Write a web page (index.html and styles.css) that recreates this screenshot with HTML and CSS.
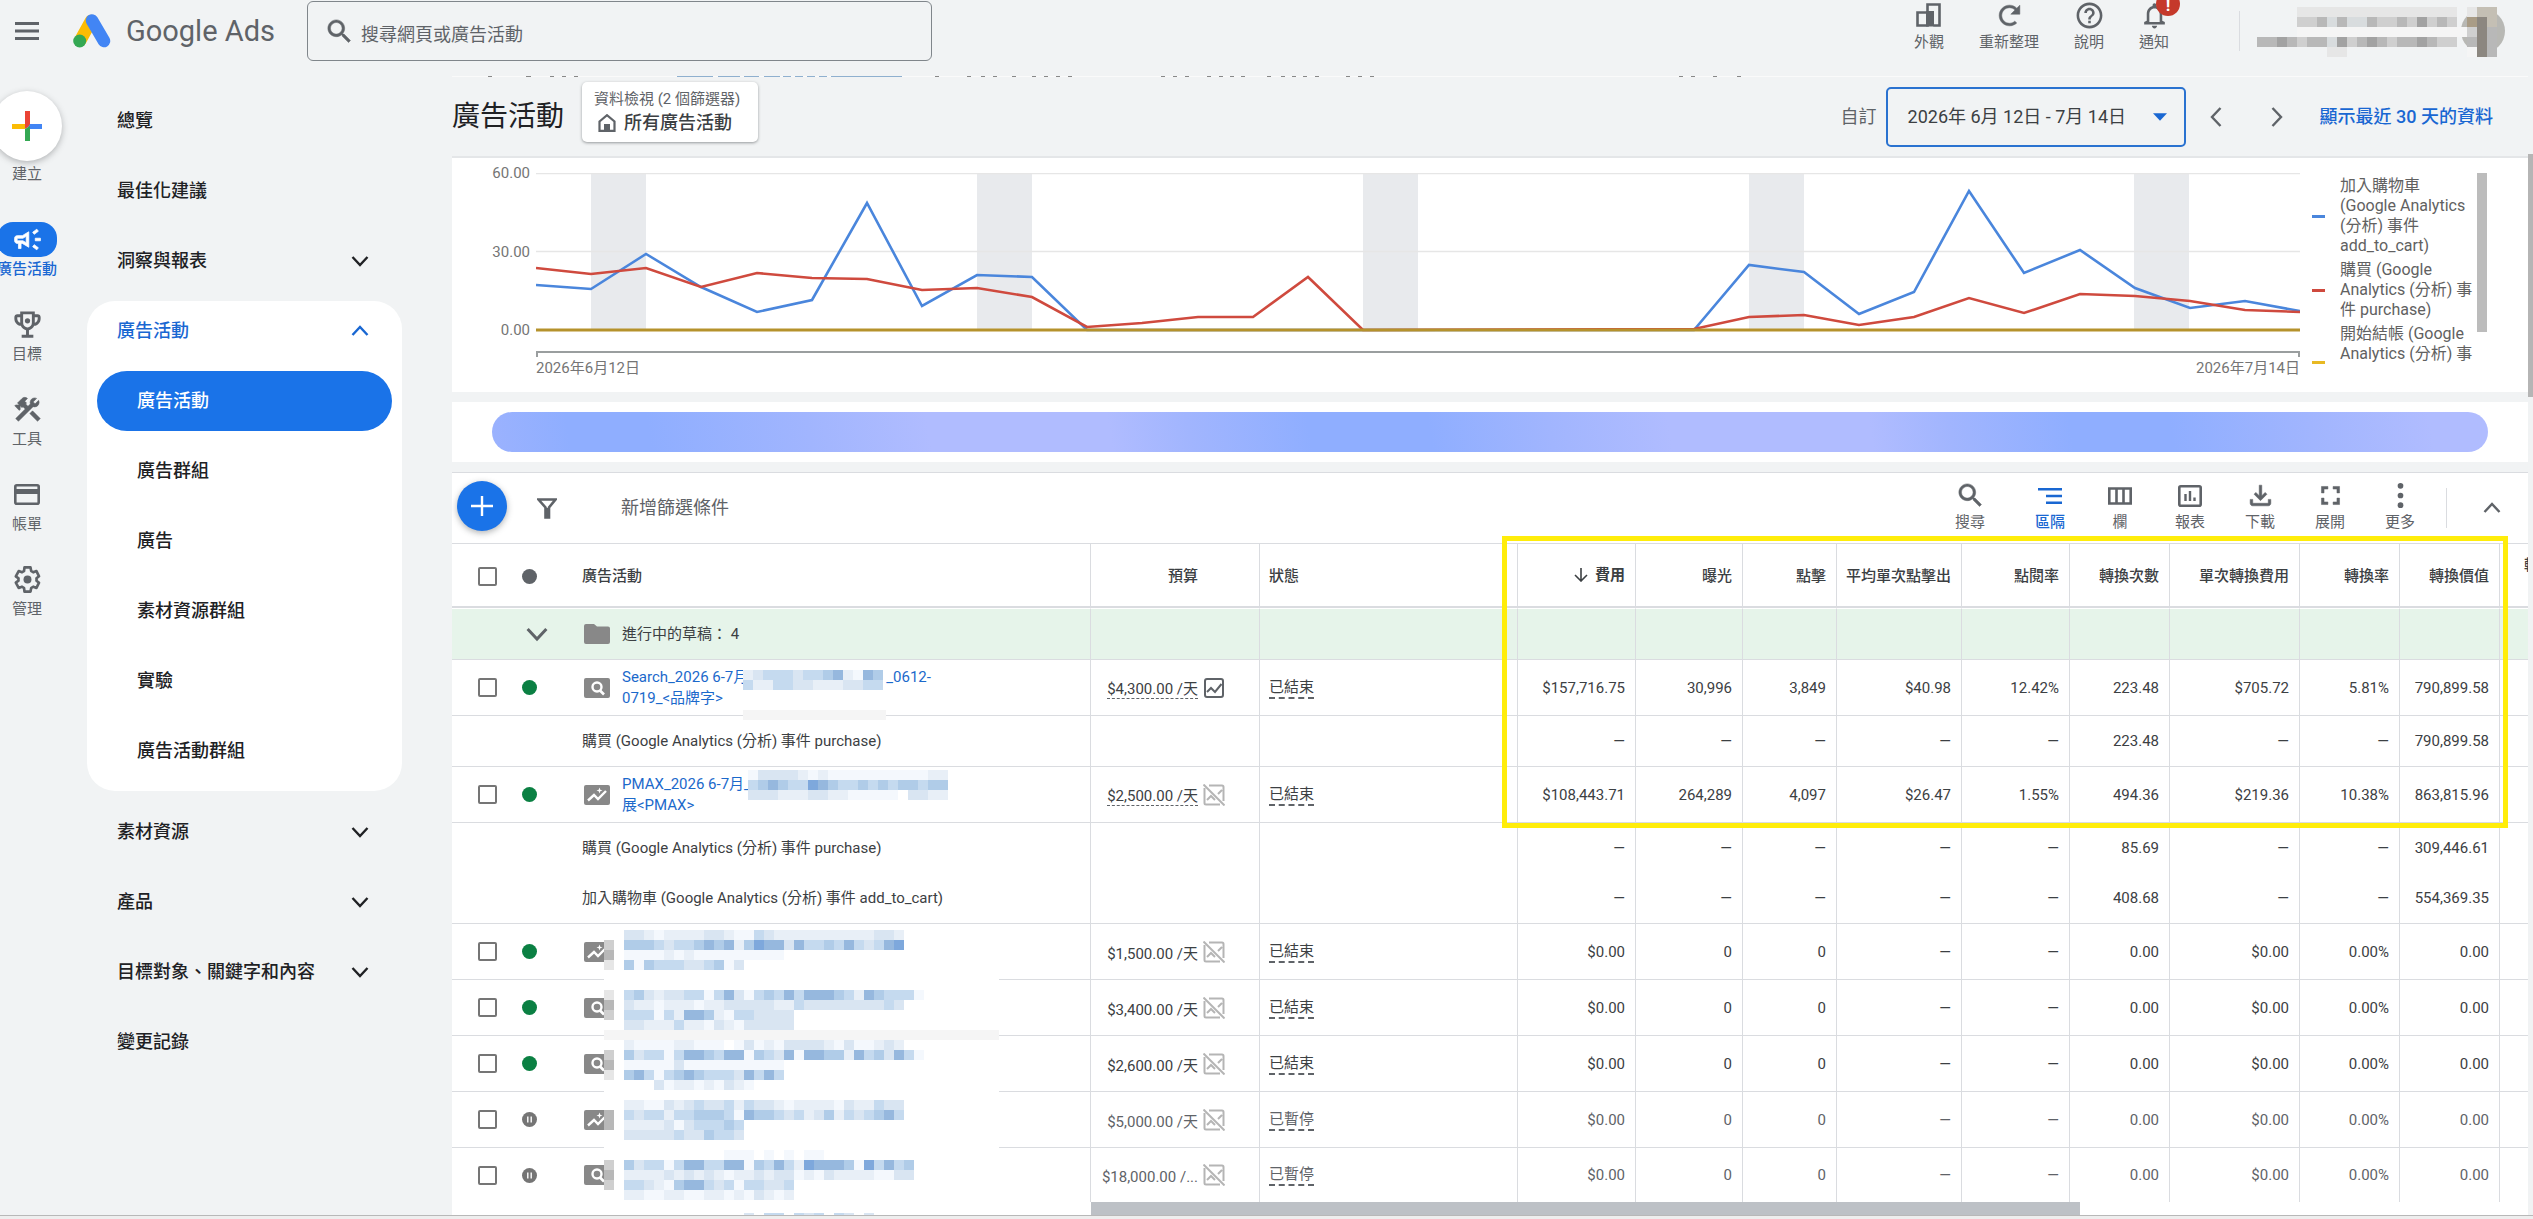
FILE: index.html
```html
<!DOCTYPE html>
<html lang="zh-Hant">
<head>
<meta charset="utf-8">
<meta name="viewport" content="width=device-width, initial-scale=1">
<title>廣告活動 - Google Ads</title>
<link rel="stylesheet" href="styles.css">
</head>
<body>
<svg class="sprite" aria-hidden="true">
  <symbol id="i-search" viewBox="0 0 24 24"><path d="M15.5 14h-.79l-.28-.27C15.41 12.59 16 11.11 16 9.5 16 5.91 13.09 3 9.5 3S3 5.91 3 9.5 5.91 16 9.5 16c1.61 0 3.09-.59 4.23-1.57l.27.28v.79l5 4.99L20.49 19l-4.99-5zm-6 0C7.01 14 5 11.99 5 9.5S7.01 5 9.5 5 14 7.01 14 9.5 11.99 14 9.5 14z" stroke="currentColor" stroke-width=".4"/></symbol>
  <symbol id="i-down" viewBox="0 0 24 24"><path d="M4.5 8l7.5 8 7.500-8" fill="none" stroke="currentColor" stroke-width="2.400"/></symbol>
  <symbol id="i-up" viewBox="0 0 24 24"><path d="M4.500 16L12 8l7.500 8" fill="none" stroke="currentColor" stroke-width="2.400"/></symbol>
  <symbol id="i-search-tile" viewBox="0 0 26 20"><rect width="26" height="20" rx="2" fill="#888"/><circle cx="13" cy="9" r="4.500" fill="none" stroke="#fff" stroke-width="2.400"/><path d="M15.500 12l4.500 4.500" stroke="#fff" stroke-width="2.600"/></symbol>
  <symbol id="i-pmax-tile" viewBox="0 0 26 20"><rect width="26" height="20" rx="2" fill="#888"/><path d="M4 15.500l6-5.500 4 4 8-8" fill="none" stroke="#fff" stroke-width="2.400"/><path d="M15.500 2.500l.8 2.200 2.200.8-2.200.8-.8 2.200-.8-2.200-2.200-.8 2.200-.8z" fill="#fff"/></symbol>
  <symbol id="i-graph" viewBox="0 0 20 20"><rect x="1" y="1" width="18" height="18" rx="2" fill="none" stroke="currentColor" stroke-width="2"/><path d="M3 14l4-4 4 4 6.500-8" fill="none" stroke="currentColor" stroke-width="2"/></symbol>
  <symbol id="i-graph-off" viewBox="0 0 22 22"><path d="M6 1.500h13a1.500 1.500 0 0 1 1.500 1.500v14M17 20.500H3A1.500 1.500 0 0 1 1.500 19V4M4 16l4-4 4 4M15 10l4-4" fill="none" stroke="currentColor" stroke-width="2"/><path d="M.5.5l21 21" stroke="currentColor" stroke-width="2"/></symbol>
  <symbol id="i-pause" viewBox="0 0 15 15"><circle cx="7.500" cy="7.500" r="7.500"/><path d="M5.800 4.500v6M9.200 4.500v6" stroke="#fff" stroke-width="1.400"/></symbol>
</svg>

<header class="topbar">
  <button class="plain menu" aria-label="主選單"><svg width="24" height="18" viewBox="0 0 24 18"><path d="M0 1.500h24M0 9h24M0 16.500h24" stroke="#5f6368" stroke-width="3"/></svg></button>
  <a class="brand" href="#">
    <svg width="38" height="34" viewBox="0 0 38 34" aria-hidden="true">
      <path d="M18 7L7.500 26" stroke="#fbbc04" stroke-width="12.500" stroke-linecap="round"/>
      <path d="M19 6.500L31 27" stroke="#4285f4" stroke-width="12.500" stroke-linecap="round"/>
      <circle cx="6.700" cy="27" r="6.500" fill="#34a853"/>
    </svg>
    <span>Google Ads</span>
  </a>
  <label class="search">
    <svg class="ic30"><use href="#i-search"/></svg>
    <input type="search" placeholder="搜尋網頁或廣告活動" aria-label="搜尋網頁或廣告活動">
  </label>
  <nav class="actions">
    <button class="plain action"><svg width="28" height="26" viewBox="0 0 28 26"><path d="M2.500 10.500h10v13h-10zM12.500 10V2.500h12V23.500h-6" fill="none" stroke="currentColor" stroke-width="2.600"/><path d="M11 9h8v15.500h-8z"/></svg><span>外觀</span></button>
    <button class="plain action"><svg class="ic30" viewBox="0 0 24 24"><path d="M17.650 6.350C16.200 4.900 14.210 4 12 4c-4.420 0-7.990 3.580-7.990 8s3.570 8 7.990 8c2.200 0 4.100-.8 5.600-2.200l-1.500-1.400C15.100 17.400 13.600 18 12 18c-3.310 0-6-2.690-6-6s2.690-6 6-6c1.660 0 3.140.69 4.220 1.780L13 11h7V4l-2.350 2.350z" stroke="currentColor" stroke-width=".4"/></svg><span>重新整理</span></button>
    <button class="plain action"><svg class="ic30" viewBox="0 0 24 24"><path d="M11 18h2v-2h-2v2zm1-16C6.480 2 2 6.480 2 12s4.480 10 10 10 10-4.480 10-10S17.520 2 12 2zm0 18c-4.410 0-8-3.590-8-8s3.590-8 8-8 8 3.590 8 8-3.590 8-8 8zm0-14c-2.210 0-4 1.790-4 4h2c0-1.100.9-2 2-2s2 .9 2 2c0 2-3 1.750-3 5h2c0-2.250 3-2.500 3-5 0-2.210-1.790-4-4-4z"/></svg><span>說明</span></button>
    <button class="plain action bell"><svg class="ic30" viewBox="0 0 24 24"><path d="M12 22c1.100 0 2-.9 2-2h-4c0 1.100.9 2 2 2zm6-6v-5c0-3.070-1.630-5.640-4.500-6.320V4c0-.83-.67-1.500-1.500-1.500s-1.500.67-1.500 1.500v.68C7.640 5.360 6 7.920 6 11v5l-2 1v2h16v-2l-2-1zm-2 1H8v-6c0-2.480 1.510-4.500 4-4.500s4 2.020 4 4.500v6z"/></svg><span>通知</span><b class="badge">!</b></button>
  </nav>
  <div class="account"><svg class="mosaic" data-mosaic="account" width="250" height="50" role="img" aria-label="帳戶"></svg></div>
</header>

<div class="body">
  <nav class="rail">
    <button class="plain rail-item create"><span class="create-ic"><svg width="30" height="30" viewBox="0 0 30 30"><path d="M13 0h5v15l-5 3z" fill="#ea4335"/><path d="M0 13h13v5H0z" fill="#fbbc04"/><path d="M18 13h12v5H15z" fill="#4285f4"/><path d="M13 18l5-3v15h-5z" fill="#34a853"/></svg></span><span>建立</span></button>
    <a class="rail-item on" href="#"><span class="rail-ic"><svg class="ic30" viewBox="0 0 24 24"><path d="M18 11v2h4v-2h-4zm-2 6.610c.96.71 2.210 1.650 3.200 2.390.4-.53.8-1.070 1.200-1.600-.99-.74-2.240-1.680-3.200-2.400-.4.54-.8 1.080-1.200 1.610zM20.400 5.600c-.4-.53-.8-1.070-1.200-1.600-.99.74-2.240 1.680-3.200 2.400.4.53.8 1.070 1.200 1.600.96-.72 2.210-1.650 3.200-2.400zM4 9c-1.100 0-2 .9-2 2v2c0 1.100.9 2 2 2h1v4h2v-4h1l5 3V6L8 9H4zm5.030 1.710L11 9.530v4.940l-1.970-1.180-.48-.29H4v-2h4.550l.48-.29z" stroke="#fff" stroke-width=".6"/></svg></span><span>廣告活動</span></a>
    <a class="rail-item" href="#"><span class="rail-ic"><svg class="ic34" viewBox="0 0 24 24"><path d="M19 5h-2V3H7v2H5c-1.100 0-2 .9-2 2v1c0 2.550 1.920 4.630 4.390 4.940.63 1.500 1.980 2.630 3.610 2.960V19H8v2h8v-2h-3v-3.100c1.630-.33 2.980-1.460 3.610-2.960C19.080 12.630 21 10.550 21 8V7c0-1.100-.9-2-2-2zM5 8V7h2v3.820C5.840 10.400 5 9.300 5 8zm7 6c-1.650 0-3-1.350-3-3V5h6v6c0 1.650-1.350 3-3 3zm7-6c0 1.300-.84 2.400-2 2.820V7h2v1z"/><circle cx="12" cy="9.500" r="1.800"/></svg></span><span>目標</span></a>
    <a class="rail-item" href="#"><span class="rail-ic"><svg class="ic30" viewBox="0 0 24 24"><path d="M13.783 15.172l2.121-2.121 5.996 5.996-2.121 2.121zM17.500 10c1.930 0 3.500-1.570 3.500-3.500 0-.58-.16-1.120-.41-1.600l-2.700 2.700-1.490-1.490 2.700-2.700c-.48-.25-1.020-.41-1.600-.41C15.570 3 14 4.570 14 6.500c0 .41.08.8.21 1.160l-1.850 1.850-1.780-1.780.71-.71-1.410-1.410L12 3.490c-1.170-1.170-3.070-1.170-4.240 0L4.220 7.030l1.410 1.410H2.810l-.71.71 3.540 3.540.71-.71V9.150l1.410 1.410.71-.71 1.780 1.780-7.410 7.410 2.120 2.120L16.340 9.790c.36.13.75.21 1.160.21z" stroke="#5f6368" stroke-width=".4"/></svg></span><span>工具</span></a>
    <a class="rail-item" href="#"><span class="rail-ic"><svg width="26" height="21" viewBox="0 0 26 21"><rect x="1.300" y="1.300" width="23.400" height="18.400" rx="1.500" fill="none" stroke="currentColor" stroke-width="2.600"/><path d="M1 5h24v5H1z"/></svg></span><span>帳單</span></a>
    <a class="rail-item" href="#"><span class="rail-ic"><svg width="29" height="29" viewBox="0 0 24 24"><path d="M19.430 12.980c.04-.32.07-.64.07-.98s-.03-.66-.07-.98l2.110-1.650-2.120-4.350-2.660 1.030c-.52-.4-1.080-.73-1.690-.98L14.500 2h-5l-.37 3.070c-.61.25-1.170.59-1.690.98L4.700 5.020 2.340 9.370l2.230 1.650c-.04.32-.07.65-.07.98s.03.66.07.98l-2.230 1.650 2.360 4.350 2.740-1.030c.52.4 1.080.73 1.690.98L9.500 22h5l.57-3.070c.61-.25 1.170-.59 1.690-.98l2.660 1.030 2.120-4.350z" fill="none" stroke="currentColor" stroke-width="2.200" stroke-linejoin="round"/><circle cx="12" cy="12" r="3.300"/></svg></span><span>管理</span></a>
  </nav>

  <nav class="sidebar">
    <a class="nav" href="#">總覽</a>
    <a class="nav" href="#">最佳化建議</a>
    <a class="nav" href="#">洞察與報表<svg class="ic24"><use href="#i-down"/></svg></a>
    <div class="nav-card">
      <a class="nav head" href="#">廣告活動<svg class="ic24"><use href="#i-up"/></svg></a>
      <a class="sub on" href="#">廣告活動</a>
      <a class="sub" href="#">廣告群組</a>
      <a class="sub" href="#">廣告</a>
      <a class="sub" href="#">素材資源群組</a>
      <a class="sub" href="#">實驗</a>
      <a class="sub" href="#">廣告活動群組</a>
    </div>
    <a class="nav" href="#">素材資源<svg class="ic24"><use href="#i-down"/></svg></a>
    <a class="nav" href="#">產品<svg class="ic24"><use href="#i-down"/></svg></a>
    <a class="nav" href="#">目標對象、關鍵字和內容<svg class="ic24"><use href="#i-down"/></svg></a>
    <a class="nav" href="#">變更記錄</a>
  </nav>

  <main class="main">
    <svg class="peek" height="1" aria-hidden="true"><path d="M36 .5h4m34 0h5m19 0h4m8 0h4m8 0h4m357 0h4m28 0h4m10 0h4m8 0h4m15 0h4m16 0h4m8 0h4m8 0h4m8 0h4m89 0h4m8 0h4m8 0h4m18 0h4m8 0h4m7 0h4m7 0h4m22 0h4m10 0h4m7 0h4m7 0h4m8 0h4m27 0h4m8 0h4m8 0h4m305 0h4m8 0h4m18 0h4m20 0h4" stroke="#888"/><path d="M225 .5h36m5 0h22m4 0h15m5 0h16m3 0h8m4 0h8m4 0h8m4 0h8m4 0h71" stroke="#8fb0cf"/></svg>

    <div class="title-row">
      <h1>廣告活動</h1>
      <button class="chip">
        <span class="chip-top">資料檢視 (2 個篩選器)</span>
        <span class="chip-main"><svg width="18" height="18" viewBox="0 0 18 18"><path d="M1.500 7.500L9 1.200l7.500 6.300v9.300h-15z" fill="none" stroke="#5f6368" stroke-width="2.200"/><path d="M6 10h6v7H6z" fill="#5f6368"/></svg>所有廣告活動</span>
      </button>
      <div class="dates">
        <span class="custom">自訂</span>
        <button class="range">2026年 6月 12日 - 7月 14日<svg width="14" height="8" viewBox="0 0 13 7"><path d="M0 0h13L6.500 7z"/></svg></button>
        <button class="plain step" aria-label="上一期"><svg width="12" height="20" viewBox="0 0 12 20"><path d="M10.500 1L2 10l8.500 9" fill="none" stroke="currentColor" stroke-width="2.400"/></svg></button>
        <button class="plain step next" aria-label="下一期"><svg width="12" height="20" viewBox="0 0 12 20"><path d="M1.500 1l8.500 9-8.500 9" fill="none" stroke="currentColor" stroke-width="2.400"/></svg></button>
        <a class="last30" href="#">顯示最近 30 天的資料</a>
      </div>
    </div>

    <section class="chart">
      <div class="y-axis"><span>60.00</span><span>30.00</span><span>0.00</span></div>
      <div class="plot">
        <svg viewBox="0 0 1764 184" preserveAspectRatio="none" role="img" aria-label="轉換事件趨勢">
          <path d="M55 0h55v157H55zM441 0h55v157h-55zM827 0h55v157h-55zM1213 0h55v157h-55zM1598 0h55v157h-55z" fill="#e8eaed"/>
          <path d="M0 .5h1764M0 78.500h1764" stroke="#e6e6e6" stroke-width="1.500"/>
          <path d="M1 184v-5h1762v5" fill="none" stroke="#9a9e9f" stroke-width="2"/>
          <polyline fill="none" stroke="#4a86dc" stroke-width="2.600" points="0,112 55,116 110,81 165,114 221,139 276,127 331,30 386,133 441,102 496,104 551,157 1158,157 1213,92 1268,99 1323,141 1378,119 1433,18 1488,100 1544,77 1599,115 1654,135 1709,128 1764,138"/>
          <polyline fill="none" stroke="#cf4a3e" stroke-width="2.600" points="0,95 55,101 110,95 165,114 221,100 276,105 331,106 386,117 441,115 496,124 551,154 606,150 662,144 717,144 772,104 827,157 1158,156 1213,144 1268,142 1323,152 1378,144 1433,125 1488,140 1544,121 1599,123 1654,128 1709,137 1764,139"/>
          <path d="M0 157h1764" stroke="#b5922c" stroke-width="3"/>
        </svg>
        <div class="x-axis"><span>2026年6月12日</span><span>2026年7月14日</span></div>
      </div>
      <ul class="legend">
        <li><i class="blue"></i><span>加入購物車 (Google Analytics (分析) 事件 add_to_cart)</span></li>
        <li><i class="red"></i><span>購買 (Google Analytics (分析) 事件 purchase)</span></li>
        <li class="cut"><i class="gold"></i><span>開始結帳 (Google Analytics (分析) 事</span></li>
      </ul>
      <div class="legend-bar"></div>
    </section>

    <section class="loading"><div class="loading-bar"></div></section>

    <section class="panel">
      <div class="toolbar">
        <button class="fab" aria-label="新增"><svg width="22" height="20" viewBox="0 0 22 20"><path d="M11 0v20M0 10h22" stroke="#fff" stroke-width="2.400"/></svg></button>
        <svg class="funnel" width="20" height="21" viewBox="0 0 20 21"><path d="M1.500 1.500h17L12 9.500v10H8.500v-10z" fill="none" stroke="currentColor" stroke-width="2.600"/><path d="M8 10h4.500v10H8z"/></svg>
        <input class="filter" type="text" placeholder="新增篩選條件" aria-label="新增篩選條件">
        <div class="tools">
          <button class="plain tool"><svg class="ic30"><use href="#i-search"/></svg><span>搜尋</span></button>
          <button class="plain tool on"><svg width="24" height="16" viewBox="0 0 24 16"><path d="M0 1.200h24M8 8h16M8 14.800h16" stroke="currentColor" stroke-width="2.400"/></svg><span>區隔</span></button>
          <button class="plain tool"><svg width="24" height="18" viewBox="0 0 24 18"><path d="M1.300 1.500h21.400v15H1.300zM8.500 1v16M15.500 1v16" fill="none" stroke="currentColor" stroke-width="2.600"/></svg><span>欄</span></button>
          <button class="plain tool"><svg width="24" height="22" viewBox="0 0 24 22"><rect x="1.300" y="1.300" width="21.400" height="19.400" rx="1.500" fill="none" stroke="currentColor" stroke-width="2.600"/><path d="M7.500 9v7M12 6v10M16.500 12.500v3.500" stroke="currentColor" stroke-width="2.400"/></svg><span>報表</span></button>
          <button class="plain tool"><svg class="ic30" viewBox="0 0 24 24"><path d="M18 15v3H6v-3H4v3c0 1.100.9 2 2 2h12c1.100 0 2-.9 2-2v-3h-2zm-1-4l-1.410-1.410L13 12.170V4h-2v8.170L8.410 9.590 7 11l5 5 5-5z" stroke="currentColor" stroke-width=".4"/></svg><span>下載</span></button>
          <button class="plain tool"><svg class="ic30" viewBox="0 0 24 24"><path d="M7 14H5v5h5v-2H7v-3zm-2-4h2V7h3V5H5v5zm12 7h-3v2h5v-5h-2v3zM14 5v2h3v3h2V5h-5z" stroke="currentColor" stroke-width=".4"/></svg><span>展開</span></button>
          <button class="plain tool"><svg class="ic30" viewBox="0 0 24 24"><circle cx="12" cy="4.500" r="2.200"/><circle cx="12" cy="12" r="2.200"/><circle cx="12" cy="19.500" r="2.200"/></svg><span>更多</span></button>
        </div>
        <button class="plain collapse" aria-label="收合"><svg class="ic24"><use href="#i-up"/></svg></button>
      </div>

      <table>
        <colgroup><col class="c-check"><col class="c-dot"><col class="c-name"><col class="c-budget"><col class="c-status"><col class="c-cost"><col class="c-impr"><col class="c-clicks"><col class="c-cpc"><col class="c-ctr"><col class="c-conv"><col class="c-cpa"><col class="c-rate"><col class="c-value"><col class="c-next"></colgroup>
        <thead>
          <tr><th class="ck"><input type="checkbox" aria-label="全選"></th><th class="dt"><i class="dot all"></i></th><th class="nm">廣告活動</th><th class="bg">預算</th><th class="st">狀態</th>
            <th class="sorted"><span class="sort"><svg width="14" height="14" viewBox="0 0 14 14"><path d="M7 0v12.500M1 7l6 6 6-6" fill="none" stroke="currentColor" stroke-width="1.600"/></svg>費用</span></th>
            <th>曝光</th><th>點擊</th><th>平均單次點擊出</th><th>點閱率</th><th>轉換次數</th><th>單次轉換費用</th><th>轉換率</th><th>轉換價值</th><th class="nx">轉</th></tr>
        </thead>
        <tbody>
          <tr class="draft"><td></td><td class="dt"><svg class="ic26"><use href="#i-down"/></svg></td><td class="nm"><div class="camp"><svg class="tile" viewBox="0 0 26 20"><path d="M2 0h8l3 2.500h11a2 2 0 0 1 2 2V18a2 2 0 0 1-2 2H2a2 2 0 0 1-2-2V2a2 2 0 0 1 2-2z" fill="#888"/></svg><span>進行中的草稿： 4</span></div></td><td></td><td></td><td></td><td></td><td></td><td></td><td></td><td></td><td></td><td></td><td></td><td></td></tr>
          <tr class="row"><td class="ck"><input type="checkbox" aria-label="選取 Search"></td><td class="dt"><i class="dot"></i></td><td class="nm"><div class="camp"><svg class="tile"><use href="#i-search-tile"/></svg><a href="#">Search_2026 6-7月<span class="gap search-gap"></span>_0612-<br>0719_&lt;品牌字&gt;</a></div><svg class="mosaic m-search" data-mosaic="search" width="143" height="50"></svg></td><td class="bg"><span class="money dash">$4,300.00 /天</span><svg class="g20"><use href="#i-graph"/></svg></td><td class="st"><span class="status">已結束</span></td><td>$157,716.75</td><td>30,996</td><td>3,849</td><td>$40.98</td><td>12.42%</td><td>223.48</td><td>$705.72</td><td>5.81%</td><td>790,899.58</td><td></td></tr>
          <tr class="seg"><td></td><td></td><td class="nm">購買 (Google Analytics (分析) 事件 purchase)</td><td></td><td></td><td>—</td><td>—</td><td>—</td><td>—</td><td>—</td><td>223.48</td><td>—</td><td>—</td><td>790,899.58</td><td></td></tr>
          <tr class="row"><td class="ck"><input type="checkbox" aria-label="選取 PMAX"></td><td class="dt"><i class="dot"></i></td><td class="nm"><div class="camp"><svg class="tile"><use href="#i-pmax-tile"/></svg><a href="#">PMAX_2026 6-7月_<br>展&lt;PMAX&gt;</a></div><svg class="mosaic m-pmax" data-mosaic="pmax" width="200" height="30"></svg></td><td class="bg"><span class="money dash">$2,500.00 /天</span><svg class="g22"><use href="#i-graph-off"/></svg></td><td class="st"><span class="status">已結束</span></td><td>$108,443.71</td><td>264,289</td><td>4,097</td><td>$26.47</td><td>1.55%</td><td>494.36</td><td>$219.36</td><td>10.38%</td><td>863,815.96</td><td></td></tr>
          <tr class="seg open"><td></td><td></td><td class="nm">購買 (Google Analytics (分析) 事件 purchase)</td><td></td><td></td><td>—</td><td>—</td><td>—</td><td>—</td><td>—</td><td>85.69</td><td>—</td><td>—</td><td>309,446.61</td><td></td></tr>
          <tr class="seg"><td></td><td></td><td class="nm">加入購物車 (Google Analytics (分析) 事件 add_to_cart)</td><td></td><td></td><td>—</td><td>—</td><td>—</td><td>—</td><td>—</td><td>408.68</td><td>—</td><td>—</td><td>554,369.35</td><td></td></tr>
          <tr class="row"><td class="ck"><input type="checkbox" aria-label="選取廣告活動 3"></td><td class="dt"><i class="dot"></i></td><td class="nm"><div class="camp"><svg class="tile"><use href="#i-pmax-tile"/></svg></div><svg class="mosaic m-list" data-mosaic="list" width="395" height="285"></svg></td><td class="bg"><span class="money">$1,500.00 /天</span><svg class="g22"><use href="#i-graph-off"/></svg></td><td class="st"><span class="status">已結束</span></td><td>$0.00</td><td>0</td><td>0</td><td>—</td><td>—</td><td>0.00</td><td>$0.00</td><td>0.00%</td><td>0.00</td><td></td></tr>
          <tr class="row"><td class="ck"><input type="checkbox" aria-label="選取廣告活動 4"></td><td class="dt"><i class="dot"></i></td><td class="nm"><div class="camp"><svg class="tile"><use href="#i-search-tile"/></svg></div></td><td class="bg"><span class="money">$3,400.00 /天</span><svg class="g22"><use href="#i-graph-off"/></svg></td><td class="st"><span class="status">已結束</span></td><td>$0.00</td><td>0</td><td>0</td><td>—</td><td>—</td><td>0.00</td><td>$0.00</td><td>0.00%</td><td>0.00</td><td></td></tr>
          <tr class="row"><td class="ck"><input type="checkbox" aria-label="選取廣告活動 5"></td><td class="dt"><i class="dot"></i></td><td class="nm"><div class="camp"><svg class="tile"><use href="#i-search-tile"/></svg></div></td><td class="bg"><span class="money">$2,600.00 /天</span><svg class="g22"><use href="#i-graph-off"/></svg></td><td class="st"><span class="status">已結束</span></td><td>$0.00</td><td>0</td><td>0</td><td>—</td><td>—</td><td>0.00</td><td>$0.00</td><td>0.00%</td><td>0.00</td><td></td></tr>
          <tr class="row paused"><td class="ck"><input type="checkbox" aria-label="選取廣告活動 6"></td><td class="dt"><svg class="p15"><use href="#i-pause"/></svg></td><td class="nm"><div class="camp"><svg class="tile"><use href="#i-pmax-tile"/></svg></div></td><td class="bg"><span class="money">$5,000.00 /天</span><svg class="g22"><use href="#i-graph-off"/></svg></td><td class="st"><span class="status">已暫停</span></td><td>$0.00</td><td>0</td><td>0</td><td>—</td><td>—</td><td>0.00</td><td>$0.00</td><td>0.00%</td><td>0.00</td><td></td></tr>
          <tr class="row paused last"><td class="ck"><input type="checkbox" aria-label="選取廣告活動 7"></td><td class="dt"><svg class="p15"><use href="#i-pause"/></svg></td><td class="nm"><div class="camp"><svg class="tile"><use href="#i-search-tile"/></svg></div></td><td class="bg"><span class="money">$18,000.00 /...</span><svg class="g22"><use href="#i-graph-off"/></svg></td><td class="st"><span class="status">已暫停</span></td><td>$0.00</td><td>0</td><td>0</td><td>—</td><td>—</td><td>0.00</td><td>$0.00</td><td>0.00%</td><td>0.00</td><td></td></tr>
        </tbody>
      </table>
      <div class="h-track"><div class="h-thumb"></div></div>
      <div class="highlight"></div>
    </section>
    <div class="v-thumb"></div>
  </main>
</div>
<footer class="window-edge"></footer>
<script src="mosaic.js"></script>
</body>
</html>
```
FILE: styles.css
```css
* { box-sizing: border-box; }
html, body { height: 100%; }
body {
  margin: 0;
  display: flex;
  flex-direction: column;
  overflow: hidden;
  background: #f1f3f4;
  color: #3c4043;
  font: 15px/20px Roboto, "Noto Sans CJK TC", sans-serif;
}
a { color: inherit; text-decoration: none; }
svg { display: block; flex: none; fill: currentColor; }
input::placeholder { color: #5f6368; opacity: 1; }
.sprite { position: absolute; width: 0; height: 0; }
.plain { border: 0; background: none; padding: 0; font: inherit; color: inherit; cursor: pointer; }
.ic24 { width: 24px; height: 24px; }
.ic26 { width: 30px; height: 30px; }
.ic30 { width: 31px; height: 31px; }
.ic34 { width: 35px; height: 35px; }

/* Top bar */
.topbar { flex: none; height: 76px; display: flex; align-items: flex-start; color: #5f6368; }
.menu { margin: 22px 0 0 15px; }
.brand { display: flex; align-items: center; gap: 15px; margin: 14px 0 0 34px; width: 234px; height: 34px; font-size: 29px; line-height: 34px; white-space: nowrap; }
.search {
  display: flex; align-items: center; gap: 6px;
  width: 625px; height: 60px; margin-top: 1px; padding-left: 16px;
  border: 1px solid #80868b; border-radius: 6px;
}
.search input, .filter { border: 0; outline: 0; background: none; flex: 1; font: inherit; font-size: 18px; padding: 0; }
.search input { padding-top: 8px; }
.actions { display: flex; margin-left: auto; height: 52px; }
.action { display: flex; flex-direction: column; align-items: center; justify-content: flex-end; width: 80px; position: relative; }
.action svg { margin-bottom: 1px; }
.action:first-child svg { margin-bottom: 4px; }
.bell { width: 50px; }
.badge { position: absolute; left: 27px; top: -8px; width: 24px; height: 24px; border-radius: 50%; background: #c5392b; color: #fff; font-size: 17px; line-height: 26px; text-align: center; }
.account { margin: 11px 26px 0 60px; height: 40px; border-left: 1px solid #dadce0; padding-left: 17px; }
.account svg { margin-top: -4px; }

.body { flex: 1; min-height: 0; display: flex; }

/* Icon rail */
.rail { flex: none; width: 54px; padding-top: 15px; display: flex; flex-direction: column; align-items: center; gap: 28px; color: #5f6368; }
.rail-item { display: flex; flex-direction: column; align-items: center; gap: 2px; white-space: nowrap; }
.create { margin-bottom: 10px; gap: 3px; }
.create-ic { width: 70px; height: 70px; border-radius: 50%; background: #fff; display: grid; place-items: center; box-shadow: 0 2px 6px rgba(60, 64, 67, .35); }
.rail-ic { width: 60px; height: 35px; display: grid; place-items: center; }
.rail-item.on { color: #1967d2; font-weight: 500; }
.on .rail-ic { background: #1a73e8; border-radius: 16px; color: #fff; }

/* Sidebar */
.sidebar { flex: none; width: 315px; margin: 0 50px 0 33px; padding-top: 9px; color: #202124; font-size: 18px; font-weight: 500; }
.nav { display: flex; align-items: center; justify-content: space-between; height: 70px; padding: 1px 30px 0; white-space: nowrap; }
.nav-card { margin: 6px 0 5px; padding: 0 10px 10px; background: #fff; border-radius: 28px; display: flex; flex-direction: column; gap: 10px; }
.nav.head { height: 58px; margin-bottom: 2px; padding: 2px 20px 0; color: #1967d2; }
.sub { height: 60px; line-height: 60px; padding-left: 40px; border-radius: 30px; }
.sub.on { background: #1a73e8; color: #fff; }

/* Main column */
.main { position: relative; flex: 1; min-width: 0; padding-right: 5px; }
.peek { width: 100%; background: #fafafa; }
.v-thumb { position: absolute; right: 0; top: 78px; width: 5px; height: 243px; background: #b5b5b5; }

.title-row { display: flex; align-items: center; height: 81px; border-bottom: 2px solid #e4e6e8; }
h1 { margin: 0 18px 0 0; font-size: 28px; line-height: 36px; font-weight: 400; color: #202124; }
.chip { align-self: flex-start; margin-top: 5px; width: 176px; height: 60px; padding: 0 0 2px 12px; border: 0; border-radius: 5px; background: #fff; box-shadow: 0 1px 3px rgba(60, 64, 67, .5); font: inherit; text-align: left; }
.chip-top { display: block; line-height: 24px; color: #5f6368; white-space: nowrap; }
.chip-main { display: flex; align-items: center; gap: 8px; padding-left: 4px; font-size: 18px; line-height: 24px; font-weight: 500; color: #3c4043; white-space: nowrap; }
.dates { display: flex; align-items: center; margin-left: auto; padding-right: 35px; font-size: 18px; }
.custom { color: #5f6368; margin-right: 9px; }
.range { display: flex; align-items: center; justify-content: space-between; width: 300px; height: 60px; padding: 0 17px 0 20px; border: 2px solid #2a72d0; border-radius: 5px; background: none; font: inherit; color: #3c4043; }
.range svg { fill: #1967d2; }
.step { margin-left: 24px; color: #5f6368; }
.step.next { margin-left: 49px; }
.last30 { margin-left: 37px; color: #1967d2; font-weight: 500; }

/* Trend chart */
.chart { display: flex; height: 234px; padding-right: 41px; background: #fff; color: #757575; }
.y-axis { width: 84px; height: 177px; margin-top: 5px; padding-right: 6px; display: flex; flex-direction: column; justify-content: space-between; text-align: right; }
.plot { flex: 1; min-width: 0; padding-top: 15px; }
.plot svg { width: 100%; height: 184px; }
.x-axis { display: flex; justify-content: space-between; padding-top: 1px; }
.legend { flex: none; list-style: none; width: 165px; height: 202px; margin: 15px 0 0 12px; padding: 3px 0 0; color: #616161; font-size: 16px; }
.legend li { display: flex; align-items: center; gap: 15px; margin-bottom: 4px; }
.legend span { flex: none; width: 135px; }
.legend i { flex: none; width: 13px; height: 3px; background: #4a86dc; }
.legend .red { background: #cf4a3e; }
.legend .gold { background: #e8b923; }
.legend .cut { align-items: flex-end; }
.legend-bar { flex: none; width: 10px; height: 159px; margin-top: 15px; background: #bcbcbc; }

.loading { margin: 10px 0; padding: 10px 40px; background: #fff; }
.loading-bar { height: 40px; border-radius: 20px; background: linear-gradient(80deg, #9bb2fe 0%, #8faeff 4%, #8faeff 8%, #a1b5fe 16%, #b0bcff 22%, #b0bcff 31%, #a1b5fe 35%, #8faeff 41%, #8faeff 47%, #a1b5fe 53%, #b0bcff 59%, #b0bcff 69%, #a1b5fe 73%, #8faeff 79%, #8faeff 84%, #a1b5fe 91%, #b0bcff 97%); }

/* Table panel */
.panel { position: relative; background: #fff; border-top: 1px solid #dadce0; overflow: hidden; }
.toolbar { display: flex; align-items: center; height: 71px; border-bottom: 1px solid #dadce0; color: #5f6368; }
.fab { width: 50px; height: 50px; margin: 0 30px 4px 5px; border: 0; border-radius: 50%; background: #1a73e8; display: grid; place-items: center; box-shadow: 0 2px 6px rgba(60, 64, 67, .4); }
.filter { margin-left: 64px; }
.tools { display: flex; margin-right: 11px; }
.tool { width: 70px; height: 52px; display: grid; grid-template-rows: 27px 25px; place-items: center; }
.tool:first-child { margin-right: 10px; }
.tool.on { color: #1967d2; font-weight: 500; }
.collapse { height: 40px; padding: 0 24px 0 33px; border-left: 1px solid #dadce0; }

table { width: 100%; table-layout: fixed; border-collapse: separate; border-spacing: 0; }
.c-check { width: 58px; } .c-dot { width: 40px; } .c-name { width: 541px; } .c-budget { width: 169px; }
.c-cost { width: 118px; } .c-impr { width: 107px; } .c-clicks { width: 94px; } .c-cpc { width: 125px; }
.c-ctr { width: 108px; } .c-conv { width: 100px; } .c-cpa { width: 130px; } .c-rate { width: 100px; }
.c-value { width: 100px; } .c-next { width: 28px; }
th, td { padding: 0 10px 0 0; border: 0 solid #dadce0; border-width: 0 1px 1px 0; text-align: right; vertical-align: middle; white-space: nowrap; }
th { height: 64px; padding-top: 2px; border-bottom-width: 2px; font-weight: 500; }
th:nth-child(-n+2), td:nth-child(-n+2), th:last-child, td:last-child { border-right: 0; }
.nx { padding: 0 0 20px 24px; text-align: left; overflow: hidden; }
.ck { padding-left: 26px; text-align: left; }
.dt { padding-left: 12px; text-align: left; }
.nm { position: relative; padding-left: 32px; text-align: left; }
.bg { padding-right: 61px; }
.st { padding-left: 9px; text-align: left; }
.sort { display: inline-flex; align-items: center; gap: 7px; font-weight: 700; }
input[type="checkbox"] { appearance: none; display: block; width: 19px; height: 19px; margin: 0; border: 2px solid #757575; border-radius: 2px; }
.dot { display: block; width: 15px; height: 15px; border-radius: 50%; background: #0b8043; }
.dot.all { background: #5f6368; }
.p15 { width: 15px; height: 15px; color: #757575; }
.draft td { height: 52px; border-top: 1px solid #fff; background: #e6f4ea; }
.draft .dt { padding-right: 0; color: #5f6368; }
.row td { height: 56px; }
.seg td { height: 51px; }
.seg.open td { height: 50px; border-bottom: 0; }
.last td { height: 54px; border-bottom: 0; }
.paused { color: #5f6368; }
.camp { display: flex; align-items: center; gap: 12px; margin-left: 2px; line-height: 21px; }
.camp a { color: #1b69cb; }
.tile { width: 26px; height: 20px; }
.gap { display: inline-block; height: 1px; }
.search-gap { width: 138px; }
td.bg { padding: 0 34px 0 0; }
td.bg > * { display: inline-block; vertical-align: middle; }
.money { margin-top: 4px; margin-right: 6px; }
.money.dash { border-bottom: 1px dashed #5f6368; line-height: 18px; }
.g20 { width: 20px; height: 20px; margin-right: 1px; color: #5f6368; }
.g22 { width: 22px; height: 22px; margin-left: -1px; color: #b5b5b5; }
.status { display: inline-block; border-bottom: 2px dashed #5f6368; line-height: 19px; }
.mosaic { position: absolute; }
.account .mosaic { position: static; }
.m-search { left: 193px; top: 10px; z-index: 1; }
.m-pmax { left: 198px; top: 3px; }
.m-list { left: 54px; top: 6px; z-index: 1; background: #fff; }

.h-track { height: 13px; padding-left: 639px; background: #fff; }
.h-thumb { width: 68.800%; height: 13px; background: #bdc1c6; }
.highlight { position: absolute; left: 1050px; right: 20px; top: 63px; height: 292px; border: 5px solid #ffed0a; pointer-events: none; z-index: 2; }

.window-edge { position: relative; z-index: 3; flex: none; height: 4px; border-top: 1px solid #b8b8b8; background: #eee; }
```
FILE: mosaic.js
```js
// Pixelated masks over private names. Each row is [y, x, tones]; a tone is one 10px block.
const TONES = {
  1: '#f4f8fd', 2: '#e8eff7', 3: '#d9e5f2', 4: '#c5daef', 5: '#b0cce8', 6: '#96b8de', 7: '#7ea8dc',
  a: '#f5f5f5', b: '#e6e6e6', c: '#cfcfcf', d: '#b8b8b8', e: '#a2a2a2', f: '#8c8780', g: '#d8dcde', h: '#a99c86', i: '#c4bfb4'
};
const MASKS = {
  search: [[0, 0, '23444344562144'], [0, 120, '65'], [10, 0, '42244332223344'], [10, 30, '4'], [40, 0, 'aaaaaaaaaaaaaaa']],
  pmax: [[0, 0, '13333212111111111122'], [10, 0, '45654476544545455455'], [20, 0, '333222332211111 3322']],
  account: [
    [0, 40, 'bbbbbbbbbbbbbbbb'], [10, 40, 'ccdgdggdccdcecdc'], [20, 40, 'aaaaaaaaaaaaaaaaaa'],
    [30, 0, 'ddedcddgecdedcddedcc'], [40, 70, 'bb'],
    [0, 210, 'bii'], [10, 210, 'hfi'], [20, 210, 'cfd'], [30, 210, 'dfd'], [40, 210, 'afd']
  ],
  list: [
    [0, 20, '3321222233211432222222222332'], [10, 0, 'c'], [10, 20, '5554344565625766364454643467'],
    [20, 0, 'd'], [20, 20, '1111212111111111'], [30, 0, 'b'], [30, 20, '515444334516'], [30, 130, '3'],
    [60, 0, 'b'], [60, 20, '453233441463145464666542654441'], [60, 310, '1'],
    [70, 0, 'd'], [70, 20, '3221222122333332243333333343'], [80, 0, 'c'], [80, 20, '44414266521443333'],
    [90, 20, '33222422132133333'], [100, 0, 'aaaaaaaaaaaaaaaaaaaaaaaaaaaaaaaaaaaaaaaa'],
    [110, 20, '2111122111 13121333321311232'], [120, 0, 'c'], [120, 20, '53441466546615436166552645364'],
    [120, 310, '1'], [130, 0, 'd'], [130, 20, '1111131111111111'], [140, 0, 'b'], [140, 20, '5641456544436464'],
    [150, 50, '3122121321'],
    [170, 20, '2211323433424332122221322433'], [180, 0, 'd'], [180, 20, '4344244555416554342352434564'],
    [190, 0, 'd'], [190, 20, '222231344454'], [200, 20, '333334335443'],
    [220, 120, '111 1 1 11'], [230, 0, 'c'], [230, 20, '53441466446615464276665174645'],
    [240, 0, 'd'], [240, 20, '22223232321223233121322221133'], [250, 0, 'c'], [250, 20, '44321566434144334'],
    [260, 20, '22112211221213212'], [283, 140, '3 44 434 43 3']
  ]
};
const NS = 'http://www.w3.org/2000/svg';
document.querySelectorAll('[data-mosaic]').forEach(svg => {
  if (svg.dataset.mosaic === 'account') {
    const photo = document.createElementNS(NS, 'circle');
    photo.setAttribute('cx', 226); photo.setAttribute('cy', 24); photo.setAttribute('r', 22);
    photo.setAttribute('fill', '#b8b8b4');
    svg.append(photo);
  }
  MASKS[svg.dataset.mosaic].forEach(([y, x, tones]) => {
    [...tones].forEach((tone, i) => {
      if (!TONES[tone]) return;
      const block = document.createElementNS(NS, 'rect');
      block.setAttribute('x', x + i * 10); block.setAttribute('y', y);
      block.setAttribute('width', 10); block.setAttribute('height', 10);
      block.setAttribute('fill', TONES[tone]);
      svg.append(block);
    });
  });
});
```
